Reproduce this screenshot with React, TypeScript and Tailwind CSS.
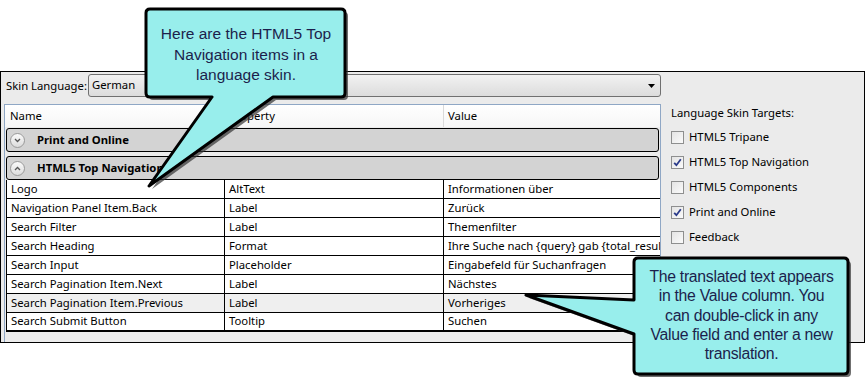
import React from 'react';

// Data rows of the language skin grid
const rows = [
  { name: 'Logo', prop: 'AltText', value: 'Informationen über' },
  { name: 'Navigation Panel Item.Back', prop: 'Label', value: 'Zurück' },
  { name: 'Search Filter', prop: 'Label', value: 'Themenfilter' },
  { name: 'Search Heading', prop: 'Format', value: 'Ihre Suche nach {query} gab {total_results} Ergebnisse' },
  { name: 'Search Input', prop: 'Placeholder', value: 'Eingabefeld für Suchanfragen' },
  { name: 'Search Pagination Item.Next', prop: 'Label', value: 'Nächstes' },
  { name: 'Search Pagination Item.Previous', prop: 'Label', value: 'Vorheriges', selected: true },
  { name: 'Search Submit Button', prop: 'Tooltip', value: 'Suchen' },
];

const targets = [
  { label: 'HTML5 Tripane', checked: false },
  { label: 'HTML5 Top Navigation', checked: true },
  { label: 'HTML5 Components', checked: false },
  { label: 'Print and Online', checked: true },
  { label: 'Feedback', checked: false },
];

function Expander({ open }: { open: boolean }) {
  return (
    <div className="w-[15px] h-[15px] rounded-full border border-[#9a9a9a] bg-gradient-to-b from-[#fafafa] to-[#dcdcdc] flex items-center justify-center">
      <svg width="7" height="5" viewBox="0 0 7 5">
        <path d={open ? 'M1 4 L3.5 1.5 L6 4' : 'M1 1 L3.5 3.5 L6 1'} fill="none" stroke="#555" strokeWidth="1.3" />
      </svg>
    </div>
  );
}

function GroupRow({ label, open }: { label: string; open: boolean }) {
  return (
    <div className="h-[24px] mx-[1px] rounded-[3px] border border-black bg-[#d3d3d3] flex items-center pl-[3px] gap-[12px]">
      <Expander open={open} />
      <span className="font-bold">{label}</span>
    </div>
  );
}

function CheckBox({ checked }: { checked: boolean }) {
  return (
    <div className="w-[13px] h-[13px] border border-[#8e8f8f] bg-gradient-to-br from-[#e4e4e4] to-[#fbfbfb] flex items-center justify-center">
      {checked && (
        <svg width="9" height="9" viewBox="0 0 9 9">
          <path d="M1.2 4.8 L3.4 7.2 L7.8 1.2" fill="none" stroke="#2a3a8a" strokeWidth="1.8" />
        </svg>
      )}
    </div>
  );
}

export default function App() {
  return (
    <div className="relative w-[866px] h-[384px] bg-white overflow-hidden text-[11.3px] text-black" style={{ fontFamily: '"Segoe UI", "Noto Sans", sans-serif' }}>
      <div className="pt-[71px]">
        {/* --- Dialog frame --- */}
        <div className="w-[865px] h-[272px] border border-black bg-[#ebebeb] flex flex-col">
          {/* Skin language selector */}
          <div className="flex items-center pt-[2px] pl-[5px] h-[25px]">
            <span className="w-[82px] leading-none whitespace-nowrap">Skin Language:</span>
            <div className="w-[573px] h-[23px] border border-[#707070] rounded-[3px] bg-gradient-to-b from-[#f2f2f2] to-[#dcdcdc] flex items-center pl-[3px] pr-[5px]">
              <span className="flex-1">German</span>
              <svg width="7" height="4" viewBox="0 0 7 4"><path d="M0 0 H7 L3.5 4 Z" fill="#000" /></svg>
            </div>
          </div>

          <div className="flex flex-1 mt-[7px] min-h-0">
            {/* Grid */}
            <div className="ml-[3px] w-[657px] border-l border-t border-r border-[#8fa7c5] bg-[#ececec] flex flex-col">
              <div className="h-[22px] bg-gradient-to-b from-white to-[#f6f6f6] flex items-center">
                <div className="w-[219px] pl-[5px]">Name</div>
                <div className="w-[219px] pl-[5px] h-full flex items-center">Property</div>
                <div className="flex-1 pl-[4px] h-full flex items-center border-l border-[#dadada]">Value</div>
              </div>
              <div className="mt-[1px]">
                <GroupRow label="Print and Online" open={false} />
              </div>
              <div className="mt-[4px]">
                <GroupRow label="HTML5 Top Navigation" open={true} />
              </div>
              <div className="ml-[1px] border-l border-black bg-white">
                {rows.map((r, i) => (
                  <div
                    key={r.name}
                    className={`flex h-[19px] items-center ${i === rows.length - 1 ? 'border-b-2' : 'border-b'} border-black ${r.selected ? 'bg-[#efefef]' : 'bg-white'}`}
                  >
                    <div className="w-[218px] pl-[4px] h-full flex items-center border-r border-black whitespace-nowrap">{r.name}</div>
                    <div className="w-[219px] pl-[4px] h-full flex items-center border-r border-black whitespace-nowrap">{r.prop}</div>
                    <div className="flex-1 pl-[4px] h-full flex items-center whitespace-nowrap overflow-hidden">{r.value}</div>
                  </div>
                ))}
              </div>
            </div>

            {/* Targets panel */}
            <div className="pl-[10px]">
              <div className="h-[19px] flex items-center">Language Skin Targets:</div>
              <div className="mt-[2px] flex flex-col">
                {targets.map((t) => (
                  <div key={t.label} className="h-[25px] flex items-center gap-[5px]">
                    <CheckBox checked={t.checked} />
                    <span>{t.label}</span>
                  </div>
                ))}
              </div>
            </div>
          </div>
        </div>
      </div>

      {/* --- Callouts (drawn over the dialog) --- */}
      <svg className="absolute left-0 top-0 pointer-events-none" width="866" height="384" viewBox="0 0 866 384">
        <g transform="translate(3,3)" fill="#333" opacity="0.7">
          <path d="M150 9 H341 Q345 9 345 13 V93 Q345 97 341 97 H273 L149 186 L212 97 H150 Q146 97 146 93 V13 Q146 9 150 9 Z" />
          <path d="M638 258 H844 Q848 258 848 262 V370 Q848 374 844 374 H638 Q634 374 634 370 V334 L526 295 L634 300 V262 Q634 258 638 258 Z" />
        </g>
        <path d="M150 9 H341 Q345 9 345 13 V93 Q345 97 341 97 H273 L149 186 L212 97 H150 Q146 97 146 93 V13 Q146 9 150 9 Z" fill="#98eeec" stroke="#000" strokeWidth="3" strokeLinejoin="round" />
        <path d="M638 258 H844 Q848 258 848 262 V370 Q848 374 844 374 H638 Q634 374 634 370 V334 L526 295 L634 300 V262 Q634 258 638 258 Z" fill="#98eeec" stroke="#000" strokeWidth="3" strokeLinejoin="round" />
      </svg>

      <div
        className="absolute left-[148px] top-[24px] w-[196px] text-center text-[15.5px] leading-[20.5px] text-[#1c1f4c]"
        style={{ fontFamily: '"Liberation Sans", Arial, sans-serif' }}
      >
        Here are the HTML5 Top<br />Navigation items in a<br />language skin.
      </div>
      <div
        className="absolute left-[637px] top-[267px] w-[209px] text-center text-[15.8px] leading-[19.3px] tracking-[-0.3px] text-[#1c1f4c] whitespace-nowrap"
        style={{ fontFamily: '"Liberation Sans", Arial, sans-serif' }}
      >
        The translated text appears<br />in the Value column. You<br />can double-click in any<br />Value field and enter a new<br />translation.
      </div>
    </div>
  );
}
